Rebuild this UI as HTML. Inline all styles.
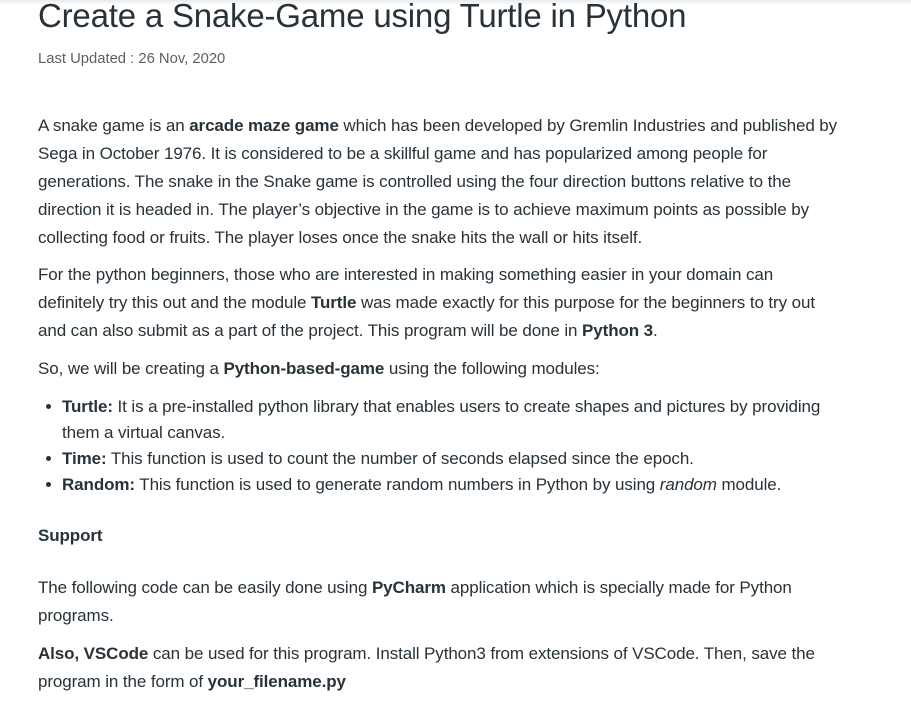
<!DOCTYPE html>
<html><head><meta charset="utf-8"><style>
body{margin:0;width:911px;height:705px;overflow:hidden;background:#fff;font-family:"Liberation Sans",sans-serif;color:#273239;position:relative}
.top{position:absolute;left:0;top:0;width:911px;height:5px;background:linear-gradient(#e8eaec,#fff)}
.l{position:absolute;left:38px;white-space:nowrap;font-size:17px;line-height:20px;letter-spacing:-0.1px}
.b{font-weight:bold}
h1{position:absolute;left:38px;top:-3px;margin:0;font-size:33px;font-weight:normal;white-space:nowrap;color:#273239;letter-spacing:-0.2px}
.d{position:absolute;left:38px;top:51px;font-size:14.8px;color:#5a6166}
.dot{position:absolute;left:46px;width:5px;height:5px;border-radius:50%;background:#273239}
</style></head><body>
<div class="top"></div>
<h1>Create a Snake-Game using Turtle in Python</h1>
<div class="d">Last Updated : 26 Nov, 2020</div>
<div class="l" style="top:116px">A snake game is an <span class="b">arcade maze game</span> which has been developed by Gremlin Industries and published by</div>
<div class="l" style="top:144px">Sega in October 1976. It is considered to be a skillful game and has popularized among people for</div>
<div class="l" style="top:172px">generations. The snake in the Snake game is controlled using the four direction buttons relative to the</div>
<div class="l" style="top:200px">direction it is headed in. The player’s objective in the game is to achieve maximum points as possible by</div>
<div class="l" style="top:228px">collecting food or fruits. The player loses once the snake hits the wall or hits itself.</div>
<div class="l" style="top:265px">For the python beginners, those who are interested in making something easier in your domain can</div>
<div class="l" style="top:293px">definitely try this out and the module <span class="b">Turtle</span> was made exactly for this purpose for the beginners to try out</div>
<div class="l" style="top:321px">and can also submit as a part of the project. This program will be done in <span class="b">Python 3</span>.</div>
<div class="l" style="top:359px">So, we will be creating a <span class="b">Python-based-game</span> using the following modules:</div>
<div class="dot" style="top:404px"></div>
<div class="l" style="top:397px;left:62px"><span class="b">Turtle:</span> It is a pre-installed python library that enables users to create shapes and pictures by providing</div>
<div class="l" style="top:423px;left:62px">them a virtual canvas.</div>
<div class="dot" style="top:456px"></div>
<div class="l" style="top:449px;left:62px"><span class="b">Time:</span> This function is used to count the number of seconds elapsed since the epoch.</div>
<div class="dot" style="top:482px"></div>
<div class="l" style="top:475px;left:62px"><span class="b">Random:</span> This function is used to generate random numbers in Python by using <i>random</i> module.</div>
<div class="l b" style="top:526px">Support</div>
<div class="l" style="top:578px">The following code can be easily done using <span class="b">PyCharm</span> application which is specially made for Python</div>
<div class="l" style="top:606px">programs.</div>
<div class="l" style="top:644px"><span class="b">Also, VSCode</span> can be used for this program. Install Python3 from extensions of VSCode. Then, save the</div>
<div class="l" style="top:672px">program in the form of <span class="b">your_filename.py</span></div>
</body></html>
